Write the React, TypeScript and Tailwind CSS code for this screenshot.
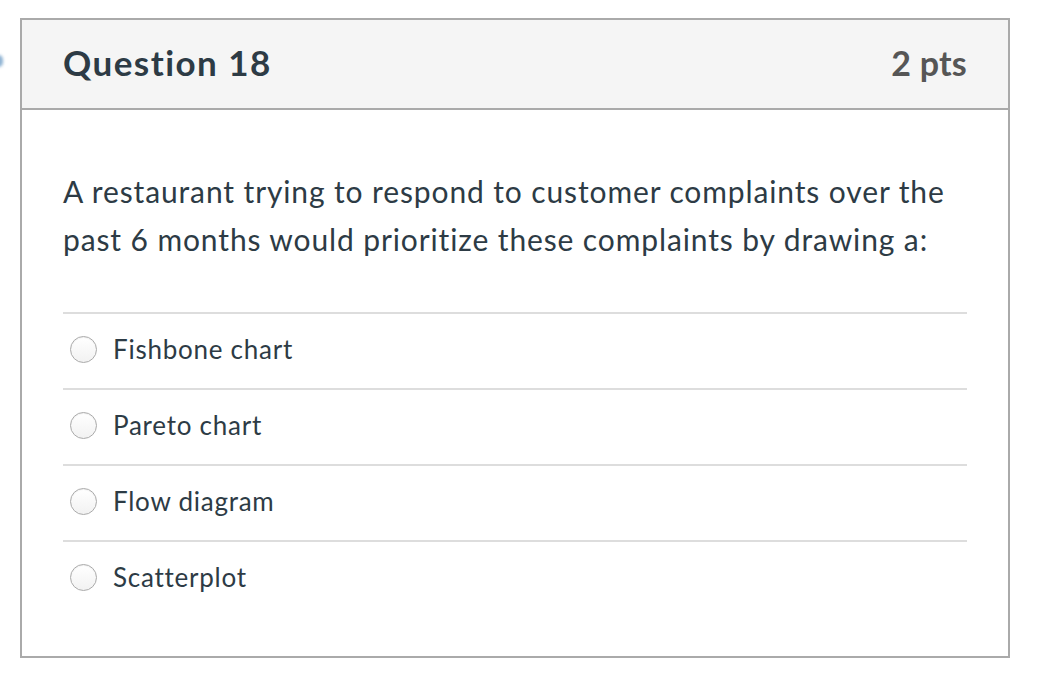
const options = ["Fishbone chart", "Pareto chart", "Flow diagram", "Scatterplot"];

function Radio() {
  return (
    <span className="inline-block h-[27px] w-[27px] shrink-0 rounded-full border-[1.5px] border-[#aaaaaa] bg-gradient-to-b from-white to-[#f2f2f2] shadow-[inset_0_1px_1px_rgba(0,0,0,0.06)]" />
  );
}

export default function App() {
  return (
    <div className="relative min-h-[682px] bg-white pl-[20px] pt-[18px] font-['Lato',sans-serif] text-[#2d3b45]">
      <div className="absolute left-[-6px] top-[55px] h-[12px] w-[9px] rounded-full bg-[#8fb3d3] blur-[1.5px]" />
      <div className="flex h-[640px] w-[990px] flex-col border-2 border-[#aaaaaa]">
        <div className="flex h-[90px] shrink-0 items-center justify-between border-b-2 border-[#aaaaaa] bg-[#f5f5f5] px-[41px] pb-[3px]">
          <h2 className="text-[35px] font-bold leading-none tracking-[1.45px]">Question 18</h2>
          <div className="text-[34px] font-bold leading-none tracking-[0.2px] text-[#565656]">2 pts</div>
        </div>
        <div className="px-[41px] pt-[57px]">
          <p className="text-[30px] leading-[48px] tracking-[0.88px]">
            A restaurant trying to respond to customer complaints over the past 6 months would prioritize these
            complaints by drawing a:
          </p>
          <div className="mt-[49px]">
            {options.map((o) => (
              <div key={o} className="flex h-[76px] items-center gap-[16px] border-t-2 border-[#dddddd] pb-[3px] pl-[7px]">
                <Radio />
                <span className="-mt-[2px] text-[26px] leading-none tracking-[0.75px]">{o}</span>
              </div>
            ))}
          </div>
        </div>
      </div>
    </div>
  );
}
